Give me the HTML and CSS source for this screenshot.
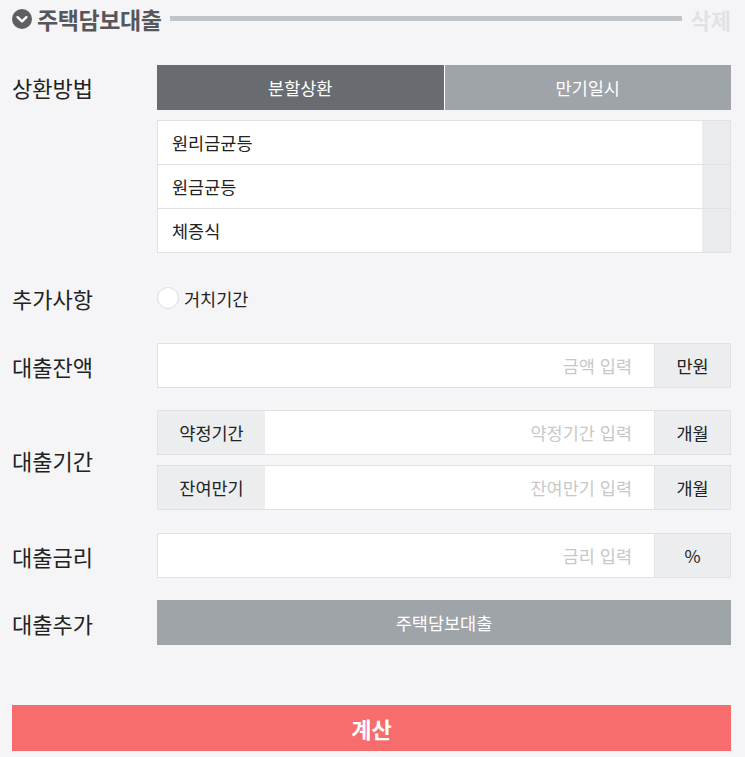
FILE: index.html
```html
<!DOCTYPE html>
<html lang="ko">
<head>
<meta charset="UTF-8" />
<meta name="viewport" content="width=device-width, initial-scale=1" />
<title>대출 계산기</title>
<link rel="stylesheet" href="styles.css">
</head>
<body>
<div class="container">
  <header class="loan-head">
    <svg class="toggle-icon" width="20" height="20" viewBox="0 0 20 20">
      <circle cx="10" cy="10" r="10" fill="#5d5f63"/>
      <path d="M5.6 8.2 L10 12.4 L14.4 8.2" fill="none" stroke="#fff" stroke-width="2.4" stroke-linecap="round" stroke-linejoin="round"/>
    </svg>
    <h1>주택담보대출</h1>
    <span class="head-line"></span>
    <button type="button" class="del-btn">삭제</button>
  </header>

  <div class="row row-top">
    <div class="label">상환방법</div>
    <div class="field">
      <div class="tabs">
        <button type="button" class="tab active">분할상환</button>
        <button type="button" class="tab">만기일시</button>
      </div>
      <ul class="method-list">
        <li><span>원리금균등</span><i></i></li>
        <li><span>원금균등</span><i></i></li>
        <li><span>체증식</span><i></i></li>
      </ul>
    </div>
  </div>

  <div class="row row-check">
    <div class="label">추가사항</div>
    <div class="field">
      <label class="radio"><span class="dot"></span>거치기간</label>
    </div>
  </div>

  <div class="row">
    <div class="label">대출잔액</div>
    <div class="field">
      <div class="input-box">
        <input type="text" placeholder="금액 입력" />
        <span class="unit">만원</span>
      </div>
    </div>
  </div>

  <div class="row">
    <div class="label">대출기간</div>
    <div class="field">
      <div class="input-box">
        <span class="prefix">약정기간</span>
        <input type="text" placeholder="약정기간 입력" />
        <span class="unit">개월</span>
      </div>
      <div class="input-box next">
        <span class="prefix">잔여만기</span>
        <input type="text" placeholder="잔여만기 입력" />
        <span class="unit">개월</span>
      </div>
    </div>
  </div>

  <div class="row row-rate">
    <div class="label">대출금리</div>
    <div class="field">
      <div class="input-box">
        <input type="text" placeholder="금리 입력" />
        <span class="unit">%</span>
      </div>
    </div>
  </div>

  <div class="row">
    <div class="label">대출추가</div>
    <div class="field">
      <button type="button" class="add-btn">주택담보대출</button>
    </div>
  </div>

  <button type="button" class="calc-btn">계산</button>
</div>
</body>
</html>
```

FILE: styles.css
```css
body {
  margin: 0; padding: 0;
  font-family: "Noto Sans CJK KR", "Noto Sans", sans-serif;
  background: #f5f5f7;
  color: #222;
}
.container {
  padding: 0 14px 0 12px;
}
button, input {
  font-family: inherit;
}
.loan-head {
  display: flex;
  align-items: center;
  height: 37px;
}
.toggle-icon {
  flex: none;
  margin-right: 5px;
}
.loan-head h1 {
  margin: 0;
  font-size: 23px;
  font-weight: 700;
  color: #55575b;
  letter-spacing: -0.4px;
}
.head-line {
  flex: 1;
  height: 5px;
  background: #c1c4c8;
  margin: 0 9px 0 8px;
}
.del-btn {
  border: none;
  background: none;
  padding: 0;
  font-size: 22px;
  font-weight: 700;
  color: #e1e2e5;
}
.row {
  display: flex;
  align-items: center;
  margin-top: 22px;
}
.row-top {
  align-items: flex-start;
  margin-top: 28px;
}
.row-top .label {
  line-height: 45px;
}
.row-rate {
  margin-top: 23px;
}
.label {
  width: 145px;
  flex: none;
  font-size: 22px;
  font-weight: 400;
  color: #222;
}
.field {
  flex: 1;
}
.tabs {
  display: flex;
  gap: 1px;
  background: #fff;
}
.tab {
  flex: 1;
  height: 45px;
  border: none;
  background: #9fa4a9;
  color: #fff;
  font-size: 17.5px;
}
.tab.active {
  background: #686b70;
}
.method-list {
  list-style: none;
  margin: 10px 0 0;
  padding: 0;
  border: 1px solid #e1e1e1;
  background: #fff;
}
.method-list li {
  display: flex;
  height: 43px;
  border-top: 1px solid #e1e1e1;
}
.method-list li:first-child {
  border-top: none;
}
.method-list span {
  flex: 1;
  padding-left: 14px;
  font-size: 17.5px;
  line-height: 43px;
}
.method-list i {
  width: 28px;
  background: #eaebed;
}
.row-check .field {
  height: 46px;
  display: flex;
  align-items: center;
}
.radio {
  display: flex;
  align-items: center;
  font-size: 17.5px;
  color: #222;
}
.dot {
  width: 20px;
  height: 20px;
  border: 1px solid #dcdcdc;
  border-radius: 50%;
  background: #fff;
  margin-right: 5px;
}
.input-box {
  display: flex;
  height: 43px;
  border: 1px solid #e1e1e1;
  background: #fff;
}
.input-box.next {
  margin-top: 10px;
}
.input-box input {
  flex: 1;
  min-width: 0;
  border: none;
  padding: 0 22px 0 10px;
  text-align: right;
  font-size: 17.5px;
  background: #fff;
  outline: none;
}
.input-box input::placeholder {
  color: #c8c8c8;
}
.prefix, .unit {
  flex: none;
  display: flex;
  align-items: center;
  justify-content: center;
  background: #ebedef;
  font-size: 17.5px;
  color: #222;
}
.prefix {
  width: 107px;
}
.unit {
  width: 75px;
  border-left: 1px solid #e4e4e4;
}
.add-btn {
  display: block;
  width: 100%;
  height: 45px;
  border: none;
  background: #9fa4a9;
  color: #fff;
  font-size: 17.5px;
}
.calc-btn {
  display: block;
  width: 100%;
  height: 46px;
  margin-top: 60px;
  border: none;
  background: #f76c6c;
  color: #fff;
  font-size: 22px;
  font-weight: 700;
}
```
